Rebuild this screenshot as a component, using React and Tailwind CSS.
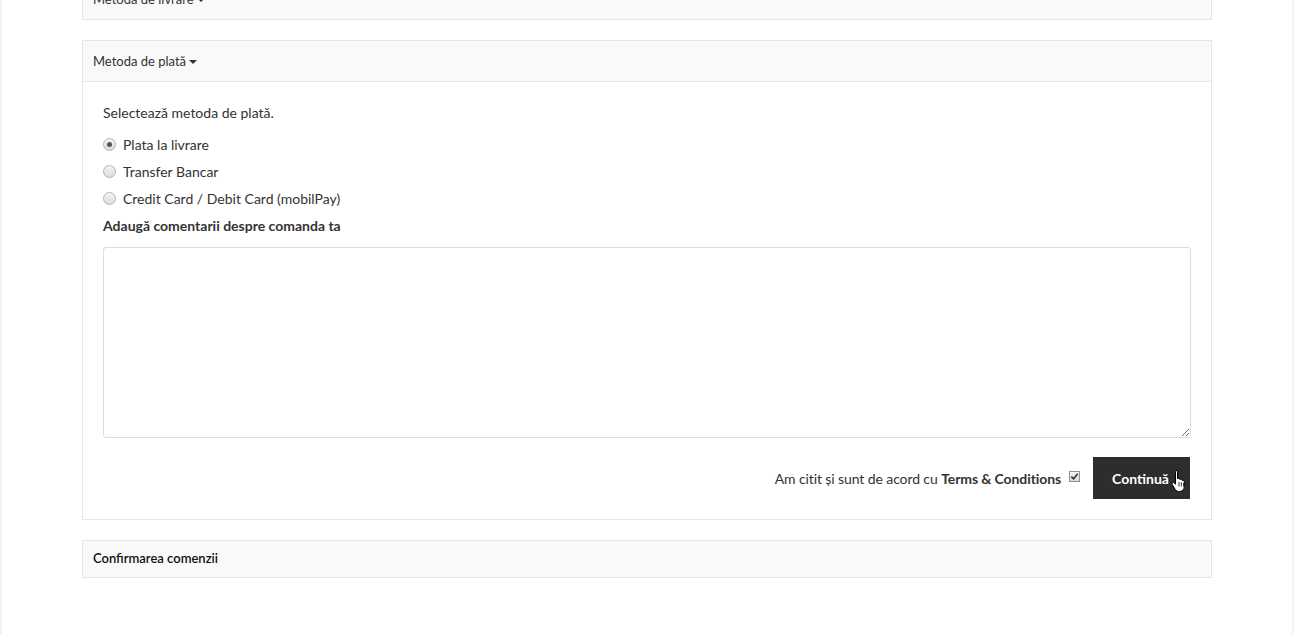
import { useState } from "react";

function Radio({ checked }) {
    return (
        <span className="relative inline-block w-[13px] h-[13px] rounded-full border border-[#b4b4b4] bg-gradient-to-b from-[#f4f4f4] to-[#dcdcdc] shrink-0">
            {checked && <span className="absolute left-[3px] top-[3px] w-[5px] h-[5px] rounded-full bg-[#555]" />}
        </span>
    );
}

function Caret() {
    return <span className="inline-block ml-[3px] align-middle border-t-[4px] border-t-[#333] border-x-[4px] border-x-transparent" />;
}

export default function App() {
    const [method, setMethod] = useState("ramburs");
    const options = [
        { id: "ramburs", label: "Plata la livrare" },
        { id: "transfer", label: "Transfer Bancar" },
        { id: "card", label: "Credit Card / Debit Card (mobilPay)" },
    ];

    return (
        <div className="h-[634px] overflow-hidden bg-[#f3f3f3] px-[2px] font-['Lato','Liberation_Sans',sans-serif] text-[13px] text-[#333]">
            <div className="bg-white h-full px-[80px] flow-root">
                {/* livrare - collapsed, scrolled off top */}
                <div className="-mt-[21px] border border-[#e6e6e6] bg-[#f9f9f9] h-[41px] flex items-center px-[10px]">
                    Metoda de livrare <Caret />
                </div>

                {/* plata */}
                <div className="mt-[20px] border border-[#e6e6e6]">
                    <div className="h-[41px] pt-[2px] bg-[#f9f9f9] border-b border-[#e6e6e6] flex items-center px-[10px]">
                        Metoda de plată <Caret />
                    </div>
                    <div className="px-[20px] pt-[21px] pb-[20px] text-[14px]">
                        <p className="leading-[20px]">Selectează metoda de plată.</p>
                        <div className="mt-[11px] flex flex-col gap-[7px]">
                            {options.map(o => (
                                <label key={o.id} onClick={() => setMethod(o.id)} className="flex items-center h-[20px] cursor-pointer">
                                    <span className="w-[20px] flex"><Radio checked={method === o.id} /></span>
                                    <span>{o.label}</span>
                                </label>
                            ))}
                        </div>
                        <p className="mt-[8px] font-bold leading-[20px]">Adaugă comentarii despre comanda ta</p>
                        <textarea className="mt-[11px] block w-full h-[191px] border border-[#dcdcdc] rounded-[3px] outline-none p-2" />
                        <div className="mt-[19px] flex items-center justify-end pr-[1px]">
                            <span className="tracking-[-0.1px]">Am citit și sunt de acord cu <b>Terms &amp; Conditions</b></span>
                            <span className="ml-[8px] mr-[13px] -mt-[3px] relative w-[11px] h-[11px] border border-[#8f8f8f] bg-gradient-to-b from-[#f4f4f4] to-[#dadada] flex items-center justify-center">
                                <svg viewBox="0 0 10 10" className="w-[9px] h-[9px]"><path d="M1.5 5.2 L4 7.6 L8.6 2" fill="none" stroke="#333" strokeWidth="1.8" /></svg>
                            </span>
                            <button className="relative h-[42px] w-[97px] bg-[#2d2d2d] text-white font-bold pr-[2px]">
                                Continuă
                                <svg viewBox="0 0 16 24" className="absolute left-[78px] top-[12px] w-[16px] h-[24px]">
                                    <path d="M5 1.5c.8 0 1.5.6 1.5 1.5v6.5l1-.1c.7 0 1.3.5 1.4 1l.9-.1c.7 0 1.3.5 1.4 1.1h.6c.8 0 1.5.7 1.5 1.5v4.5c0 2.6-1.8 5-4.5 5H7.5c-1.4 0-2.4-.7-3.2-1.8L1.3 15.6c-.5-.8-.2-1.700.7-2 .6-.2 1.2 0 1.6.5l.9 1.2V3c0-.8.6-1.5 1.5-1.5z" fill="#fff" stroke="#000" strokeWidth="1" />
                                    <path d="M8 13v4.5M10.3 13.2v4.3M12.5 14v3.5" stroke="#000" strokeWidth="0.8" />
                                </svg>
                            </button>
                        </div>
                    </div>
                </div>

                {/* confirmare */}
                <div className="mt-[20px] border border-[#e6e6e6] bg-[#f9f9f9] h-[38px] flex items-center px-[10px] font-semibold text-[#111]">
                    Confirmarea comenzii
                </div>
            </div>
        </div>
    );
}
